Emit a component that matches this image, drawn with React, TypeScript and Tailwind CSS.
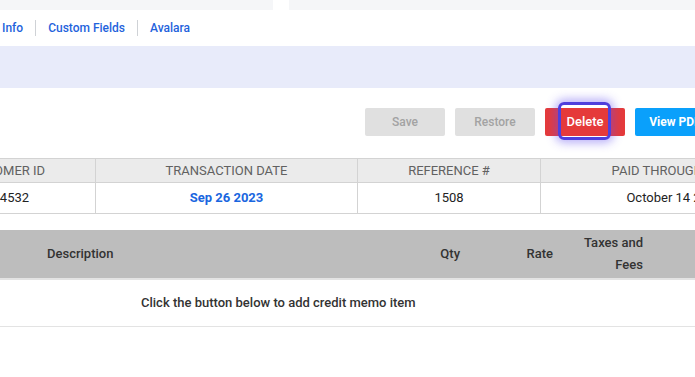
const font = { fontFamily: "Roboto, 'Liberation Sans', sans-serif" };

const tabs = ["Info", "Custom Fields", "Avalara"];

const summaryCols = [
  { label: "CUSTOMER ID", value: "1004532", w: "w-[183px]", blue: false },
  { label: "TRANSACTION DATE", value: "Sep 26 2023", w: "w-[262px]", blue: true },
  { label: "REFERENCE #", value: "1508", w: "w-[183px]", blue: false },
  { label: "PAID THROUGH DATE", value: "October 14 2023", w: "w-[268px]", blue: false },
];

export default function App() {
  return (
    <div className="w-[695px] h-[377px] overflow-hidden bg-white" style={font}>
      {/* top cards */}
      <div className="flex h-[10px] gap-[16px]">
        <div className="w-[273px] bg-[#f5f6f8]" />
        <div className="flex-1 bg-[#f5f6f8]" />
      </div>

      {/* tabs */}
      <div className="flex items-center h-[36px] pl-[2px] text-[12px] font-medium text-[#1f63dc]">
        {tabs.map((t, i) => (
          <div key={t} className="flex items-center">
            {i > 0 && <span className="w-px h-[16px] bg-[#cfd2d6] mx-[12px]" />}
            <span>{t}</span>
          </div>
        ))}
      </div>

      {/* lavender band */}
      <div className="h-[42px] bg-[#e8ebfa]" />

      {/* action buttons */}
      <div className="flex gap-[10px] pl-[365px] pt-[20px] h-[70px] w-[900px]">
        <button className="shrink-0 w-[80px] h-[28px] rounded-[2px] bg-[#e0e0e0] text-[#a3a3a3] text-[12px] font-medium">
          Save
        </button>
        <button className="shrink-0 w-[80px] h-[28px] rounded-[2px] bg-[#e0e0e0] text-[#a3a3a3] text-[12px] font-medium">
          Restore
        </button>
        <button className="shrink-0 relative w-[80px] h-[28px] rounded-[2px] bg-[#e53a3a] text-white text-[13px] font-medium">
          <span className="absolute left-[13px] top-[-6px] w-[53px] h-[38px] rounded-[6px] border-[3px] border-[#4f3fdc] shadow-[0_0_10px_3px_rgba(99,80,240,0.45)]" />
          <span className="relative">Delete</span>
        </button>
        <button className="shrink-0 w-[80px] h-[28px] rounded-[2px] bg-[#0aa0fb] text-white text-[12px] font-bold">
          View PDF
        </button>
      </div>

      {/* summary table */}
      <div className="ml-[-88px] flex w-[900px] border-y border-[#d3d3d3] text-[13px]">
        {summaryCols.map((c, i) => (
          <div key={c.label} className={`${c.w} shrink-0 ${i > 0 ? "border-l border-[#d3d3d3]" : ""}`}>
            <div className="h-[24px] flex items-center justify-center bg-[#ebebeb] border-b border-[#d3d3d3] text-[#616161]">
              {c.label}
            </div>
            <div
              className={`h-[30px] flex items-center justify-center ${
                c.blue ? "text-[#1a66e0] font-bold" : "text-[#222]"
              }`}
            >
              {c.value}
            </div>
          </div>
        ))}
      </div>

      {/* items table */}
      <div className="mt-[16px]">
        <div className="h-[50px] flex items-center bg-[#bdbdbd] border-b-2 border-[#e3e3e3] text-[13px] font-medium text-[#333]">
          <div className="w-[400px] pl-[47px]">Description</div>
          <div className="w-[60px] text-right">Qty</div>
          <div className="w-[93px] text-right">Rate</div>
          <div className="w-[90px] text-right leading-[22px]">
            Taxes and
            <br />
            Fees
          </div>
        </div>
        <div className="h-[47px] flex items-center pl-[141px] border-b border-[#e3e3e3] text-[13px] font-medium text-[#333]">
          Click the button below to add credit memo item
        </div>
      </div>
    </div>
  );
}
